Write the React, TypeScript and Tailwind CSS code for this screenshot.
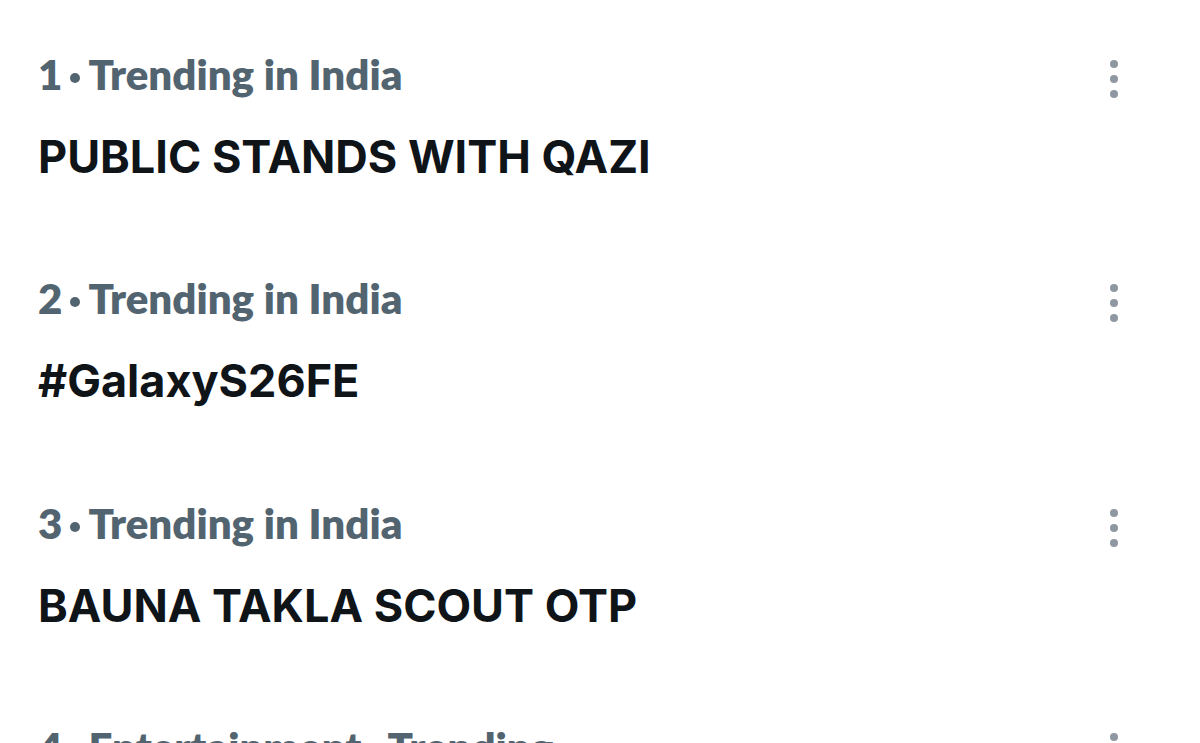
import React from 'react'

interface Trend {
  rank: number
  context: string[]
  name: string
}

const TRENDS: Trend[] = [
  { rank: 1, context: ['Trending in India'], name: 'PUBLIC STANDS WITH QAZI' },
  { rank: 2, context: ['Trending in India'], name: '#GalaxyS26FE' },
  { rank: 3, context: ['Trending in India'], name: 'BAUNA TAKLA SCOUT OTP' },
  { rank: 4, context: ['Entertainment', 'Trending'], name: '#BiggBoss19' },
]

function Bullet() {
  return <span className="inline-block w-[10px] h-[10px] rounded-full bg-[#536471] align-middle mx-[8px] -translate-y-[1px]" />
}

function MoreDots() {
  return (
    <div className="flex flex-col items-center gap-[7px] pt-[10px] w-[8px]">
      <span className="block w-[8px] h-[8px] rounded-full bg-[#8f98a1]" />
      <span className="block w-[8px] h-[8px] rounded-full bg-[#8f98a1]" />
      <span className="block w-[8px] h-[8px] rounded-full bg-[#8f98a1]" />
    </div>
  )
}

export default function App() {
  return (
    <div className="w-[1200px] h-[743px] overflow-hidden bg-white pt-[3.5px]">
      {TRENDS.map((t) => (
        <div key={t.rank} className="flex justify-between pl-[38px] pr-[82px] pt-[46px] pb-[43.5px]">
          <div className="flex flex-col">
            <span className="text-[42px] leading-[48px] font-extrabold text-[#536471] font-['Lato',sans-serif] whitespace-nowrap">
              {t.rank}
              {t.context.map((c) => (
                <React.Fragment key={c}>
                  <Bullet />
                  {c}
                </React.Fragment>
              ))}
            </span>
            <span className="mt-[31px] text-[45px] leading-[56px] font-bold text-[#0f1419] font-['Inter',sans-serif]">
              {t.name}
            </span>
          </div>
          <MoreDots />
        </div>
      ))}
    </div>
  )
}
